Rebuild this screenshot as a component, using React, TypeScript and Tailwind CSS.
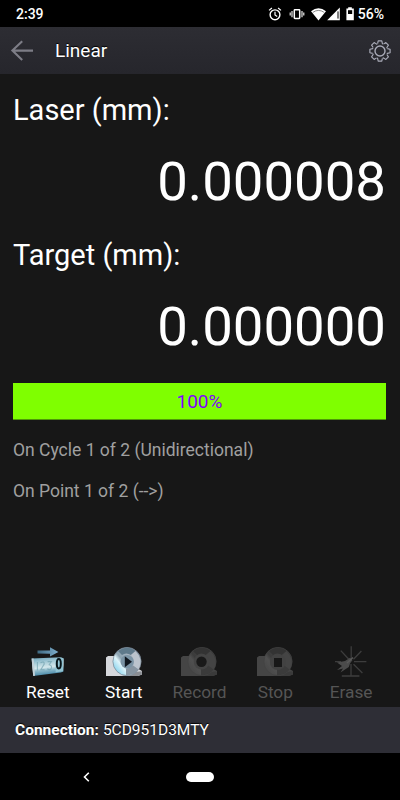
import React from 'react';
import clsx from 'clsx';

interface Action {
  label: string;
  icon: React.ReactNode;
  enabled: boolean;
}

function StatusIcons() {
  return (
    <svg className="h-[18px] w-[90px]" viewBox="0 0 90 18" fill="none">
      {/* alarm */}
      <circle cx="7" cy="9.8" r="4.9" stroke="#fff" strokeWidth="1.4" />
      <path d="M7 6.8V10L9.2 11.4M1 5.4L3.9 3M13 5.4L10.1 3" stroke="#fff" strokeWidth="1.2" />
      {/* vibrate */}
      <rect x="26.3" y="4.8" width="5.4" height="8.6" rx="0.6" stroke="#fff" strokeWidth="1.5" />
      <path d="M24 5.9V12.3M34 5.9V12.3M22.2 7.6V10.6M35.8 7.6V10.6" stroke="#fff" strokeWidth="1.1" />
      {/* wifi */}
      <path d="M43 6.2Q50.5 0.4 58 6.2L50.5 15.6Z" fill="#fff" />
      <path d="M44.8 7.4Q50.5 3.4 56.2 7.4" stroke="#000" strokeOpacity="0.5" strokeWidth="0.9" />
      {/* signal */}
      <path d="M59.2 15.2L71.8 2.6V15.2Z" fill="#fff" />
      <path d="M70 6.4V13.6" stroke="#000" strokeWidth="1" />
      {/* battery */}
      <path d="M78.4 3.4H80.2V2.2H83.8V3.4H85.8V15.2H78.4Z" fill="#fff" />
      <rect x="80" y="5.2" width="4.2" height="3.8" fill="#000" />
    </svg>
  );
}

function BackArrow() {
  return (
    <svg className="h-[24px] w-[24px]" viewBox="0 0 24 24" fill="none" stroke="#7d7d86" strokeWidth="2.1">
      <path d="M23 11.6H2.2M12.2 2.2L2.4 11.6L12.2 21" />
    </svg>
  );
}

function GearIcon() {
  return (
    <svg className="h-[22px] w-[22px]" viewBox="0 0 22 22" fill="none" stroke="#a9abb8" strokeWidth="1.15" strokeLinejoin="round">
      {[0, 45, 90, 135, 180, 225, 270, 315].map((deg) => (
        <path key={deg} d="M8.6 3.7L9.2 0.9H12.8L13.4 3.7L14.1 4" transform={`rotate(${deg} 11 11)`} />
      ))}
      <circle cx="11" cy="11" r="5" strokeWidth="1.4" />
    </svg>
  );
}

function ResetIcon() {
  return (
    <svg className="h-[34px] w-10" viewBox="0 0 40 34">
      <defs>
        <linearGradient id="counter" x1="0" y1="0" x2="0.2" y2="1">
          <stop offset="0" stopColor="#6aa3bb" />
          <stop offset="0.4" stopColor="#b3d3dc" />
          <stop offset="0.6" stopColor="#d5e8ec" />
          <stop offset="0.75" stopColor="#8bb9ca" />
          <stop offset="1" stopColor="#4788a8" />
        </linearGradient>
        <linearGradient id="arrow" x1="0" y1="0" x2="1" y2="0">
          <stop offset="0" stopColor="#3e6880" />
          <stop offset="1" stopColor="#7fb0cf" />
        </linearGradient>
      </defs>
      <path d="M9.5 5.6L22 5.6V2.2L30.4 7L22 11.4V8.8L9.5 8.6Z" fill="url(#arrow)" />
      <path d="M3.6 13.6L33 12.2L35.8 13.4L35.4 26.4L32.8 27.6L5.2 31Z" fill="url(#counter)" />
      <path d="M3.6 13.6L5.2 31L7 30.8L5.6 13.5Z" fill="#c4d1d8" />
      <path d="M27.6 13.2L35 13V26.2L27.6 27.2Z" fill="#91c3d2" />
      <g fill="none" stroke="#6c9dab" strokeWidth="1.1" strokeOpacity="0.65">
        <path d="M9.4 17V25.5M12.5 17.8Q16.4 15.6 16.2 19L12.8 24.8H16.6M19.6 16.6H23.4L21.2 19.8Q25 21 22.8 24.2Q20.6 25.4 19.4 23.6" />
      </g>
      <ellipse cx="30.8" cy="18.8" rx="2" ry="4.7" fill="none" stroke="#061317" strokeWidth="2" />
    </svg>
  );
}

function CameraIcon({ kind }: { kind: 'start' | 'record' | 'stop' }) {
  const on = kind === 'start';
  const id = `lens-${kind}`;
  return (
    <svg className="h-[34px] w-10" viewBox="0 0 40 34">
      <defs>
        <linearGradient id={id} x1="0.1" y1="0.8" x2="0.85" y2="0.2">
          <stop offset="0" stopColor={on ? '#8fd6ee' : '#484848'} />
          <stop offset="0.28" stopColor={on ? '#dff4fa' : '#505050'} />
          <stop offset="0.42" stopColor={on ? '#8ca3b1' : '#3b3b3b'} />
          <stop offset="0.75" stopColor={on ? '#a9b5c1' : '#454545'} />
          <stop offset="1" stopColor={on ? '#728293' : '#353535'} />
        </linearGradient>
      </defs>
      <path d="M2 12.5L4 11H10L12 9.5H31V22L38 26V29.5L34 31H2Z" fill={on ? '#d6d8dc' : '#454545'} />
      <path d="M31 27L37.8 26.2V29.4L34 31H18Z" fill={on ? '#8b8e93' : '#3a3a3a'} />
      <circle cx="23" cy="16.5" r="14.1" fill={`url(#${id})`} stroke={on ? '#7d8c99' : '#424242'} strokeWidth="0.8" />
      <path d="M14 6Q23 -1 31.5 6L27 10Q22 7 18 10Z" fill={on ? '#5f7a8b' : '#333333'} />
      <path d="M31.5 6Q40 14 34.5 24.5L29 20.5Q31 15 27 10Z" fill={on ? '#bbc4cd' : '#444444'} />
      <path d="M34.5 24.5Q30 30 22 30.6L22 23.5Q27 23 29 20.5Z" fill={on ? '#8795a1' : '#3b3b3b'} />
      {kind === 'start' && (
        <>
          <circle cx="23.2" cy="16.8" r="6.7" fill="#7b94a5" />
          <path d="M20.8 11.2L28 16.8L20.8 22.2Z" fill="#10171f" />
        </>
      )}
      {kind === 'record' && (
        <>
          <circle cx="22.5" cy="16.7" r="7.8" fill="#444444" />
          <circle cx="22.5" cy="16.7" r="5.2" fill="#191919" />
        </>
      )}
      {kind === 'stop' && (
        <>
          <circle cx="22.8" cy="17" r="8" fill="#424242" />
          <rect x="19" y="13" width="8" height="9" fill="#181818" />
        </>
      )}
    </svg>
  );
}

function EraseIcon() {
  return (
    <svg className="h-[34px] w-10" viewBox="0 0 40 34" fill="none" stroke="#3d3d3d">
      <path d="M20.2 1.2V14M9.8 5.6L18.5 15M30.4 6L22.5 14.2M23 16.7H35.4M22.5 19.2L31.4 28M20 19V31M4 16.7H10" strokeWidth="1.3" />
      <path d="M10.8 31H28.4" strokeWidth="1.6" />
      <path d="M6 17.5L14 16L19 12.8L21.5 15L19 18.5L17.8 22L9.5 27.5L12 23.5L6 25L11 21Z" fill="#4b4b4b" stroke="none" />
      <path d="M16 18L22 12.5" stroke="#5a5a5a" strokeWidth="1.4" />
    </svg>
  );
}

const readings = [
  { label: 'Laser (mm):', value: '0.000008' },
  { label: 'Target (mm):', value: '0.000000' }
];

const actions: Action[] = [
  { label: 'Reset', icon: <ResetIcon />, enabled: true },
  { label: 'Start', icon: <CameraIcon kind="start" />, enabled: true },
  { label: 'Record', icon: <CameraIcon kind="record" />, enabled: false },
  { label: 'Stop', icon: <CameraIcon kind="stop" />, enabled: false },
  { label: 'Erase', icon: <EraseIcon />, enabled: false }
];

export default function App() {
  return (
    <div className="flex h-[800px] w-[400px] flex-col overflow-hidden bg-[#171717] font-[Roboto,sans-serif] text-white">
      <div className="flex h-[27px] shrink-0 items-center justify-between bg-black px-4 text-[14px] font-medium">
        <span className="pt-[2px]">2:39</span>
        <div className="flex items-center">
          <StatusIcons />
          <span className="pt-[2px]">56%</span>
        </div>
      </div>

      <header className="flex h-[47px] shrink-0 items-center bg-linear-to-b from-[#2d2d33] to-[#26262c] pr-[9px] pl-[10px]">
        <BackArrow />
        <h1 className="ml-[21px] flex-1 pt-[2px] text-[19px] [text-shadow:0_-1px_1px_#000]">Linear</h1>
        <GearIcon />
      </header>

      <main className="flex flex-1 flex-col pt-4 pr-[14px] pl-[13px]">
        {readings.map((reading) => (
          <section key={reading.label} className="h-[145px]">
            <h2 className="text-[29px] leading-10">{reading.label}</h2>
            <p className="mt-[19px] text-right text-[54.5px] leading-16">{reading.value}</p>
          </section>
        ))}

        <div className="mt-[3px] h-[37px] border-b border-[#4e9a08] bg-[#7fff00] text-center text-[19px] leading-[37px] text-[#8000ff]">
          100%
        </div>

        <p className="mt-[18px] text-[17.5px] leading-6 text-[#a0a0a0]">On Cycle 1 of 2 (Unidirectional)</p>
        <p className="mt-[17px] text-[17.5px] leading-6 text-[#a0a0a0]">On Point 1 of 2 (--&gt;)</p>
      </main>

      <div className="flex h-[62px] shrink-0 pr-[11px] pl-[10px]">
        {actions.map((action) => (
          <button
            key={action.label}
            disabled={!action.enabled}
            className={clsx(
              'flex flex-1 flex-col items-center text-[17.3px] leading-6',
              action.enabled ? 'text-white' : 'text-[#555555]'
            )}
          >
            {action.icon}
            <span className="mt-px">{action.label}</span>
          </button>
        ))}
      </div>

      <footer className="flex h-[46px] shrink-0 items-center gap-1 bg-[#2e2e36] px-[15px] pt-px text-[15.5px] [text-shadow:0_-1px_1px_#000]">
        <span className="font-bold">Connection:</span>
        <span>5CD951D3MTY</span>
      </footer>

      <nav className="grid h-[47px] shrink-0 grid-cols-[174px_52px_174px] items-center bg-black">
        <svg className="h-3 w-3 justify-self-center" viewBox="0 0 12 12" fill="none" stroke="#fff" strokeWidth="1.6">
          <path d="M7.8 1.7L3.5 6L7.8 10.3" />
        </svg>
        <div className="h-[10px] w-7 justify-self-center rounded-full bg-white" />
      </nav>
    </div>
  );
}
